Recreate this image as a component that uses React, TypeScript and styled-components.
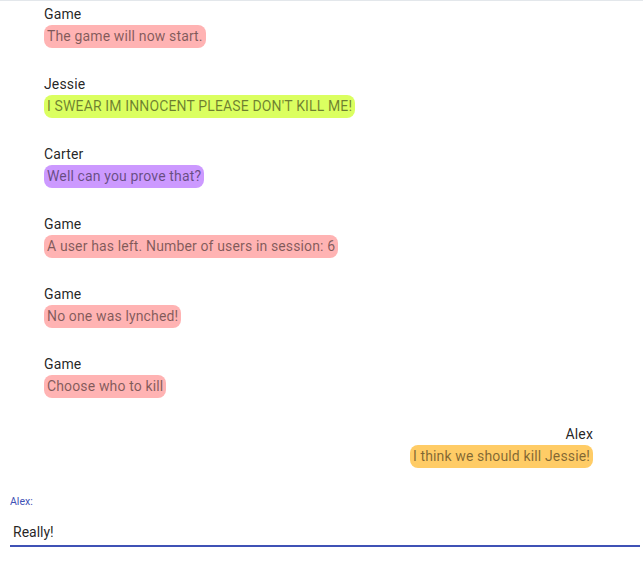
import React from 'react';
import styled, { createGlobalStyle } from 'styled-components';

const GlobalStyle = createGlobalStyle`
  html, body {
    margin: 0;
    padding: 0;
    background: #ffffff;
    font-family: Roboto, "Liberation Sans", Arial, sans-serif;
  }
`;

const Page = styled.div`
  width: 643px;
  height: 564px;
  box-sizing: border-box;
  overflow: hidden;
  display: flex;
  flex-direction: column;
  border-top: 1px solid #e3e7eb;
`;

const MessageList = styled.div`
  padding: 5px 47px 0 47px;
  display: flex;
  flex-direction: column;
  gap: 28px;
`;

const Message = styled.div<{ $mine?: boolean }>`
  display: flex;
  flex-direction: column;
  gap: 2px;
  align-items: ${p => (p.$mine ? 'flex-end' : 'flex-start')};
`;

const Sender = styled.div`
  font-size: 14px;
  line-height: 17px;
  color: rgba(0, 0, 0, 0.87);
  letter-spacing: 0.01em;
`;

const Bubble = styled.div<{ $color: string }>`
  background: ${p => p.$color};
  border-radius: 8px;
  padding: 3px;
  font-size: 14px;
  line-height: 17px;
  color: rgba(0, 0, 0, 0.5);
  letter-spacing: 0.01em;
`;

const Composer = styled.div`
  margin-top: 28px;
  padding-left: 13px;
  display: flex;
  flex-direction: column;
`;

const Label = styled.label`
  font-size: 10.5px;
  line-height: 12px;
  color: #3f51b5;
`;

const Field = styled.div`
  margin-top: 8px;
  border-bottom: 2px solid #3f51b5;
  padding: 6px 0 4px 0;
`;

const Input = styled.input`
  border: none;
  outline: none;
  padding: 0 0 0 3px;
  margin: 0;
  width: 100%;
  font-family: inherit;
  font-size: 14px;
  line-height: 17px;
  height: 17px;
  color: rgba(0, 0, 0, 0.87);
  background: transparent;
  caret-color: #000;
`;

const PINK = '#ffb3b3';
const GREEN = '#dbff60';
const PURPLE = '#cc99ff';
const ORANGE = '#ffcc66';

const messages = [
  { sender: 'Game', text: 'The game will now start.', color: PINK },
  { sender: 'Jessie', text: "I SWEAR IM INNOCENT PLEASE DON'T KILL ME!", color: GREEN },
  { sender: 'Carter', text: 'Well can you prove that?', color: PURPLE },
  { sender: 'Game', text: 'A user has left. Number of users in session: 6', color: PINK },
  { sender: 'Game', text: 'No one was lynched!', color: PINK },
  { sender: 'Game', text: 'Choose who to kill', color: PINK },
  { sender: 'Alex', text: 'I think we should kill Jessie!', color: ORANGE, mine: true },
];

export default function App() {
  return (
    <Page>
      <GlobalStyle />
      <MessageList>
        {messages.map((m, i) => (
          <Message key={`${m.sender}-${i}`} $mine={m.mine}>
            <Sender>{m.sender}</Sender>
            <Bubble $color={m.color}>{m.text}</Bubble>
          </Message>
        ))}
      </MessageList>
      <Composer>
        <Label htmlFor="chat-input">Alex:</Label>
        <Field>
          <Input id="chat-input" defaultValue="Really!" autoFocus spellCheck />
        </Field>
      </Composer>
    </Page>
  );
}
